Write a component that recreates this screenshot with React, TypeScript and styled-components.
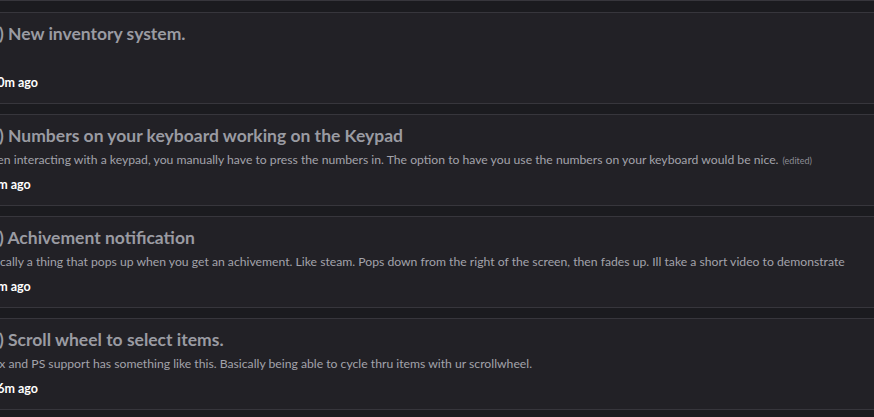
import React from "react";
import styled, { createGlobalStyle } from "styled-components";

const GlobalStyle = createGlobalStyle`
  html, body {
    margin: 0;
    padding: 0;
    background: #1b1b1f;
    overflow: hidden;
  }
  body {
    font-family: Lato, "Noto Sans", sans-serif;
  }
`;

type Post = {
  title: string;
  body?: string;
  edited?: boolean;
  time: string;
};

const posts: Post[] = [
  { title: "(0) New inventory system.", time: "20m ago" },
  {
    title: "(0) Numbers on your keyboard working on the Keypad",
    body: "When interacting with a keypad, you manually have to press the numbers in. The option to have you use the numbers on your keyboard would be nice.",
    edited: true,
    time: "9m ago",
  },
  {
    title: "(0) Achivement notification",
    body: "Basically a thing that pops up when you get an achivement. Like steam. Pops down from the right of the screen, then fades up. Ill take a short video to demonstrate",
    time: "9m ago",
  },
  {
    title: "(0) Scroll wheel to select items.",
    body: "Xbox and PS support has something like this. Basically being able to cycle thru items with ur scrollwheel.",
    time: "16m ago",
  },
];

const Page = styled.div`
  width: 874px;
  height: 417px;
  overflow: hidden;
  border-top: 1px solid #37363c;
  padding-top: 11px;
  box-sizing: border-box;
  display: flex;
  flex-direction: column;
  gap: 10px;
`;

const Card = styled.div`
  height: 92px;
  box-sizing: border-box;
  flex-shrink: 0;
  background: #222126;
  border-top: 1px solid #37363c;
  border-bottom: 1px solid #37363c;
  overflow: hidden;
`;

const Content = styled.div`
  margin-left: -16px;
  padding-top: 10px;
  display: flex;
  flex-direction: column;
`;

const Title = styled.div`
  font-size: 17.5px;
  font-weight: 700;
  line-height: 22px;
  color: #9a9ba2;
  white-space: nowrap;
`;

const Body = styled.div`
  margin-top: 4px;
  margin-left: -6px;
  height: 18px;
  font-size: 12.2px;
  line-height: 18px;
  color: #a3a3ab;
  white-space: nowrap;
`;

const Edited = styled.span`
  font-size: 9px;
  color: #8d8d95;
  margin-left: 4px;
`;

const Time = styled.div`
  margin-top: 8px;
  margin-left: 6px;
  font-size: 12.5px;
  font-weight: 700;
  line-height: 16px;
  color: #ffffff;
  white-space: nowrap;
`;

export default function App() {
  return (
    <>
      <GlobalStyle />
      <Page>
        {posts.map((p, i) => (
          <Card key={i}>
            <Content>
              <Title>{p.title}</Title>
              <Body>
                {p.body}
                {p.edited && <Edited>(edited)</Edited>}
              </Body>
              <Time>{p.time}</Time>
            </Content>
          </Card>
        ))}
      </Page>
    </>
  );
}
